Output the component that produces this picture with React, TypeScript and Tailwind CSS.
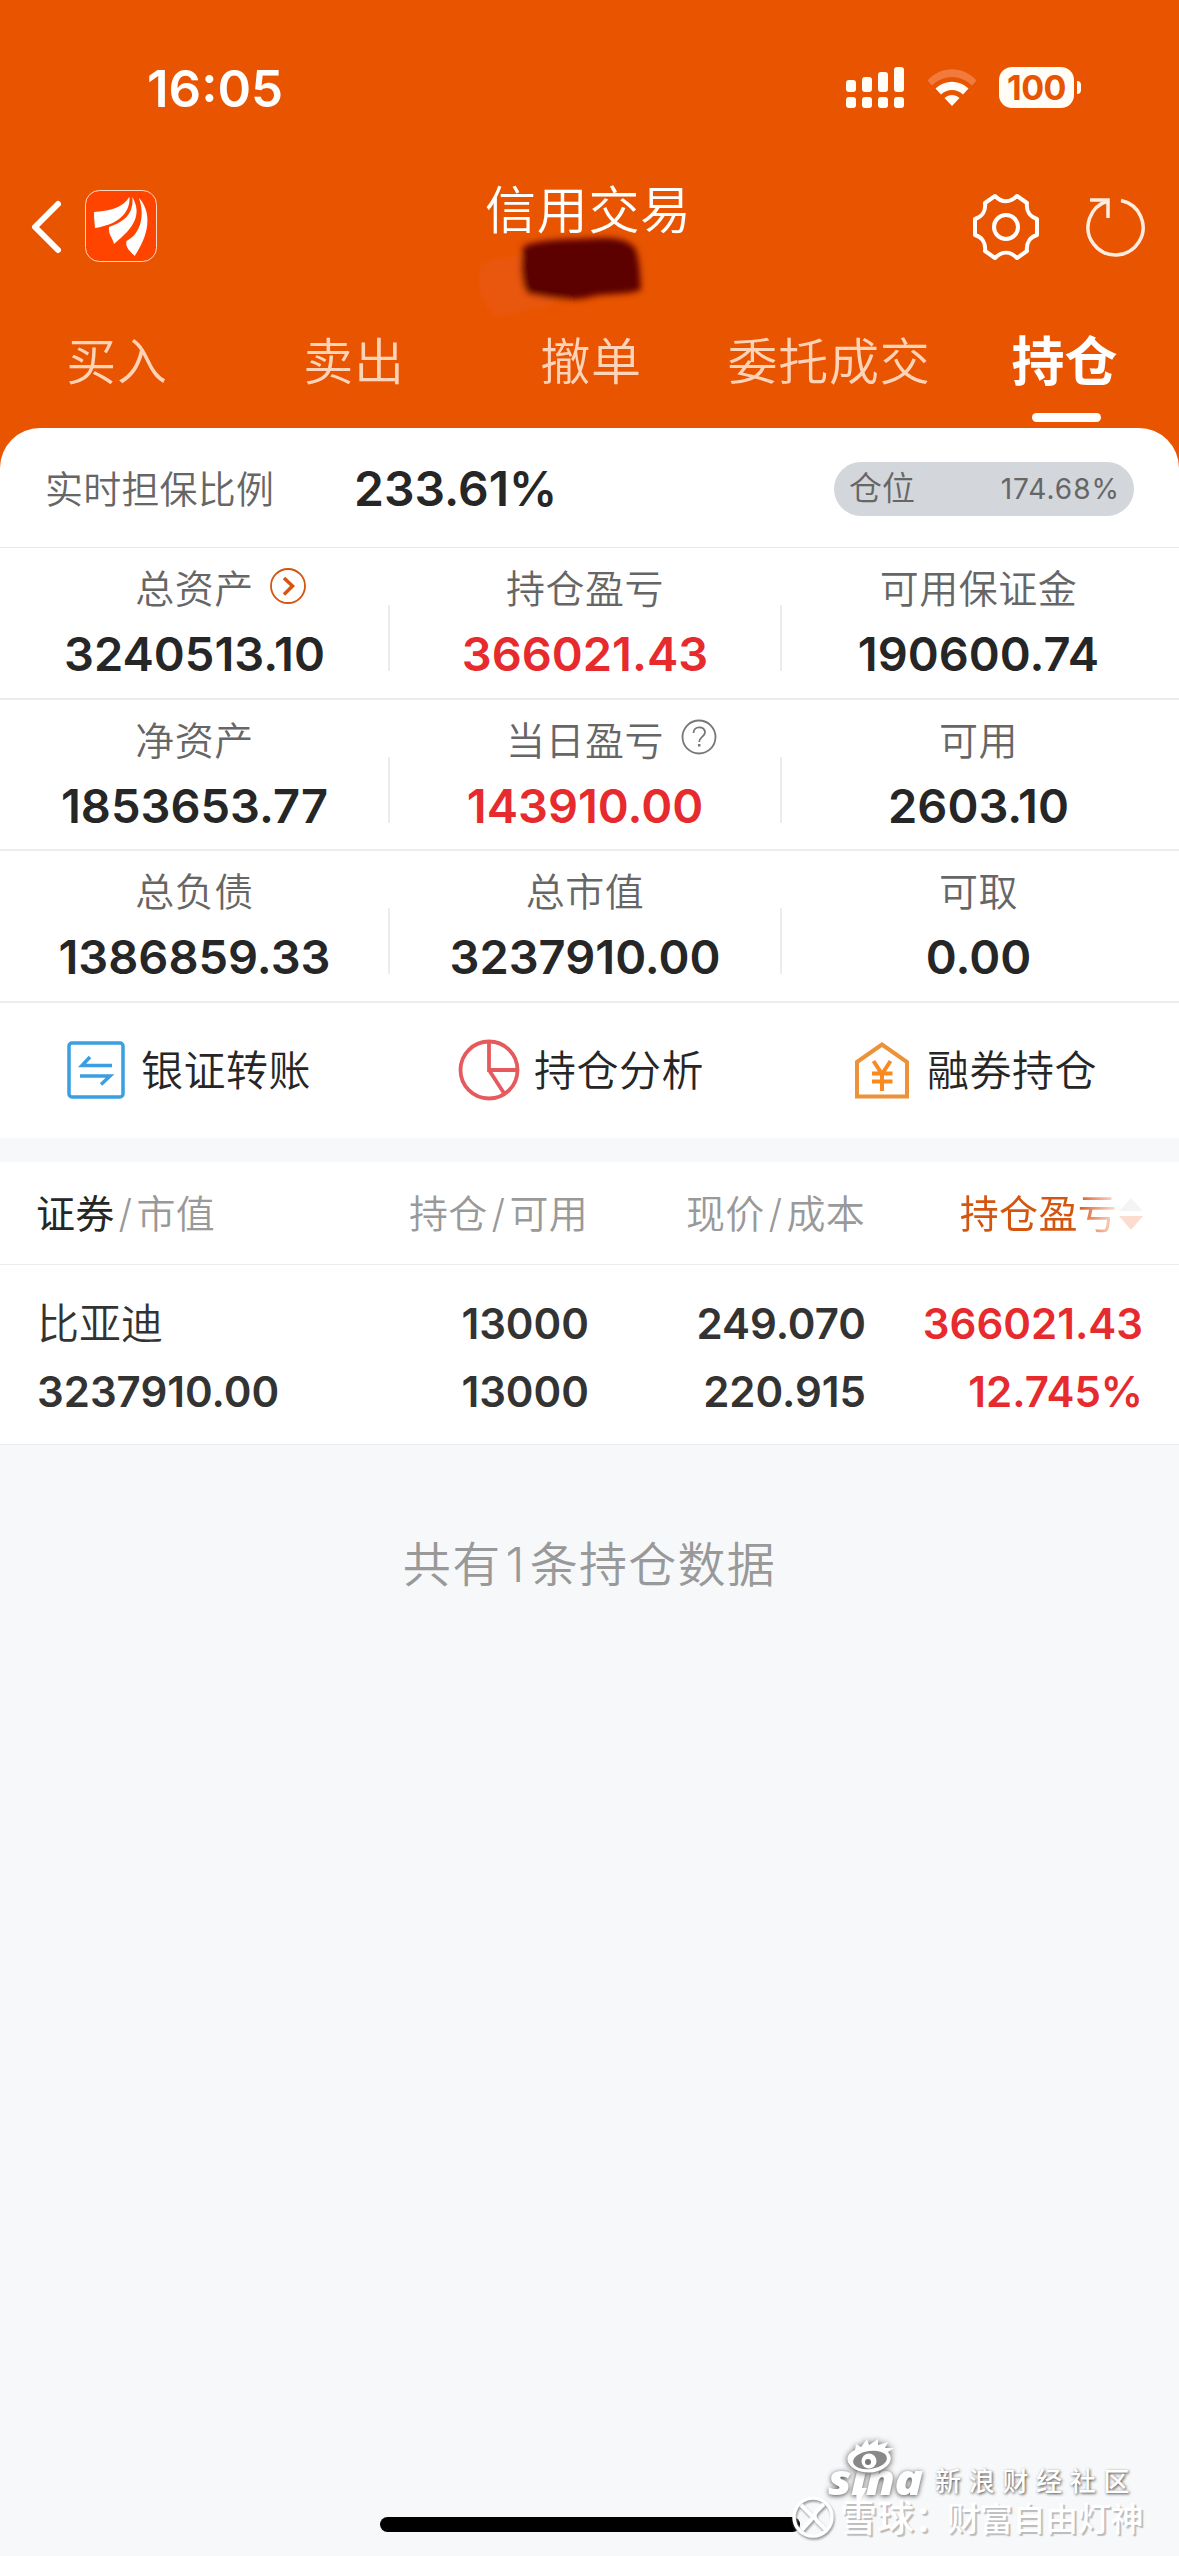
import React, { useState } from 'react';

interface Metric {
  label: string;
  value: string;
  red?: boolean;
  icon?: 'arrow' | 'help';
}

const TABS = ['买入', '卖出', '撤单', '委托成交', '持仓'];

const METRICS: Metric[][] = [
  [
    { label: '总资产', value: '3240513.10', icon: 'arrow' },
    { label: '持仓盈亏', value: '366021.43', red: true },
    { label: '可用保证金', value: '190600.74' },
  ],
  [
    { label: '净资产', value: '1853653.77' },
    { label: '当日盈亏', value: '143910.00', red: true, icon: 'help' },
    { label: '可用', value: '2603.10' },
  ],
  [
    { label: '总负债', value: '1386859.33' },
    { label: '总市值', value: '3237910.00' },
    { label: '可取', value: '0.00' },
  ],
];

const StatusBar = () => (
  <div className="flex h-[176px] items-start pt-[67px] pl-[147px] text-white">
    <span className="w-[699px] pt-px text-[51px] leading-[41px] font-semibold">16:05</span>
    <svg width="58" height="41" viewBox="0 0 58 41" fill="#fffdf5">
      <rect x="0" y="13" width="10" height="12" rx="3" />
      <rect x="16" y="10" width="10" height="15" rx="3" />
      <rect x="32" y="5" width="10" height="20" rx="3" />
      <rect x="48" y="0" width="10" height="25" rx="3" />
      <rect x="0" y="30" width="10" height="11" rx="3" />
      <rect x="16" y="30" width="10" height="11" rx="3" />
      <rect x="32" y="30" width="10" height="11" rx="3" />
      <rect x="48" y="30" width="10" height="11" rx="3" />
    </svg>
    <svg className="mt-[2px] ml-[23px]" width="50" height="38" viewBox="0 0 50 38" fill="#fffdf5">
      <path d="M0.5 11.5C14 -3.5 36 -3.5 49.5 11.5L45 16.5C33 5 17 5 5 16.5Z" fill="#f17a3c" />
      <path d="M8.5 19.5C18 10.5 32 10.5 41.5 19.5L36 25.5C30 19.5 20 19.5 14 25.5Z" />
      <path d="M17.5 29C22 25 28 25 32.5 29L25 37Z" />
    </svg>
    <div className="ml-[22px] flex h-[41px] w-[75px] items-center justify-center rounded-[13px] bg-[#fffdf5] text-[34px] leading-none font-bold tracking-[-0.5px] text-[#e85400]">
      100
    </div>
    <div className="mt-[14px] ml-[3px] h-[13px] w-[4px] rounded-r-full bg-[#fffdf5]"></div>
  </div>
);

const BrandLogo = () => (
  <svg width="72" height="72" viewBox="0 0 72 72">
    <rect x="0.5" y="0.5" width="71" height="71" rx="14" fill="#ff4400" stroke="#ffd9c4" />
    <g fill="#fff">
      <path d="M9 22C24 21 38 18 44.5 6.7C45.5 25 30 35 10 38C9.5 32 9 28 9 22Z" />
      <path d="M24 37C38 32 49 25 47.4 7C57 24 50 37 29 54C28 48 23 45 24 37Z" />
      <path d="M54 8C65 20 67 40 49.7 66C46 62 40 58 41.4 51C56 44 60 25 54 8Z" />
    </g>
  </svg>
);

const TitleBar = () => (
  <div className="flex h-[136px] items-start pl-[31px] text-white">
    <svg className="mt-[24px]" width="30" height="54" viewBox="0 0 30 54" fill="none" stroke="#fff" strokeWidth="6" strokeLinecap="round" strokeLinejoin="round">
      <path d="M27 4L4 27L27 50" />
    </svg>
    <div className="mt-[14px] ml-[24px] w-[72px]">
      <BrandLogo />
    </div>
    <div className="ml-[317px] w-[240px]">
      <h1 className="mt-[9px] pl-[11px] text-[51px] leading-[51px] font-[350] tracking-[0.7px] whitespace-nowrap">信用交易</h1>
      {/* hidden account name */}
      <svg className="mt-[-6px]" width="190" height="90" viewBox="0 0 190 90">
        <defs>
          <filter id="soft" x="-20%" y="-20%" width="140%" height="140%">
            <feGaussianBlur stdDeviation="3" />
          </filter>
        </defs>
        <g filter="url(#soft)">
          <path d="M8 34C30 24 60 24 90 26L120 66C80 70 50 86 20 86C4 72 2 50 8 34Z" fill="#e9570a" />
          <path d="M50 16C70 8 100 10 128 8C142 8 154 10 161 18C166 30 166 46 167 60C150 66 130 62 112 68C90 72 66 66 54 64C46 54 46 28 50 16Z" fill="#5c0000" />
        </g>
      </svg>
    </div>
    <svg className="mt-[17px] ml-[258px]" width="68" height="68" viewBox="-1 -1 68 68" fill="none" stroke="#fff" strokeWidth="4" strokeLinejoin="round">
      <path d="M54 9C53 17 57 23 64 25V41C57 43 53 49 54 57L44 64C37 57 29 57 22 64L12 57C13 49 9 43 2 41V25C9 23 13 17 12 9L22 2C29 9 37 9 44 2Z" />
      <circle cx="33" cy="33" r="12" />
    </svg>
    <svg className="mt-[20px] ml-[45px]" width="62" height="62" viewBox="0 0 62 62" fill="none" stroke="#ffece0" strokeWidth="3.5">
      <path d="M36 4.5A27.5 27.5 0 1 1 23 5" />
      <path d="M5 4H23V22" />
    </svg>
  </div>
);

const MetricCell = ({ item, last }: { item: Metric; last: boolean }) => (
  <div className="relative flex flex-col items-center">
    <div className="relative mt-[21px] text-[39px] leading-[39px] font-[350] tracking-[0.5px] text-[#666]">
      {item.label}
      {item.icon === 'arrow' && (
        <svg className="absolute top-[-2px] left-[134px]" width="38" height="38" viewBox="0 0 38 38" fill="none" stroke="#d4550f">
          <circle cx="19" cy="19" r="17" strokeWidth="1.8" />
          <path d="M15 11L23.5 19L15 27.5" strokeWidth="3.5" />
        </svg>
      )}
      {item.icon === 'help' && (
        <svg className="absolute top-[-3px] left-[174px]" width="38" height="38" viewBox="0 0 38 38" fill="none" stroke="#777" strokeWidth="1.8">
          <circle cx="19" cy="19" r="16.5" />
          <path d="M13.5 15C13.5 7.5 25 7.5 25 14.5C25 18.5 19.2 19 19.2 24" />
          <path d="M19.2 26V28.5" strokeWidth="2.5" />
        </svg>
      )}
    </div>
    <div className={`mt-[22px] text-[47px] leading-[47px] font-semibold ${item.red ? 'text-[#e62a2e]' : 'text-[#262626]'}`}>
      {item.value}
    </div>
    {!last && <div className="absolute top-[57px] right-[-1px] h-[66px] w-[2px] bg-[#ececec]"></div>}
  </div>
);

const TransferIcon = () => (
  <svg width="58" height="58" viewBox="0 0 58 58" fill="none" stroke="#3a9fe0" strokeWidth="3.5">
    <rect x="2" y="2" width="54" height="54" rx="3" />
    <path d="M23 16L15 24.5H45" />
    <path d="M13 35H43L34 43.5" />
  </svg>
);

const PieIcon = () => (
  <svg width="62" height="62" viewBox="0 0 62 62" fill="none" stroke="#e65a5e" strokeWidth="3.8">
    <circle cx="31" cy="31" r="28.5" />
    <path d="M31 2.5V31H59.5M31 31L46.5 55" />
  </svg>
);

const HouseIcon = () => (
  <svg width="54" height="58" viewBox="0 0 54 58" fill="none" stroke="#ec9238" strokeWidth="4">
    <path d="M2 21L27 3.5L52 21V55.5H2Z" />
    <path d="M18.5 20L27 33L35.5 20M27 33V50M17 32.5H37.5M17 40.5H37.5" stroke="#fa8a20" />
  </svg>
);

const Watermark = () => (
  <div className="absolute top-[2430px] left-[788px] h-[120px] w-[380px] text-white">
    <div className="absolute top-[71px] left-[52px] flex items-center leading-[36px] font-medium whitespace-nowrap [text-shadow:2px_2px_1px_#bbb]">
      <span className="w-[107px] text-[37px]">雪球：</span>
      <span className="text-[33px] tracking-[-0.3px]">财富自由灯神</span>
    </div>
    <svg className="absolute top-[64px] left-[2px] drop-shadow-[1px_2px_1px_#999]" width="46" height="46" viewBox="0 0 46 46" fill="none" stroke="#fff" strokeWidth="3.5">
      <circle cx="23" cy="23" r="19" />
      <path d="M11 11L21 21C23 23 23 24 21 26L12 36M34 10L27 17C24 20 24 24 27 27L36 36" strokeWidth="4" />
    </svg>
    <div className="absolute top-[35px] left-[40px] origin-left scale-x-112 font-['Open_Sans',sans-serif] text-[42px] leading-[28px] font-extrabold italic tracking-[-0.5px] [text-shadow:0px_1px_5px_#444]">
      sına
    </div>
    <svg className="absolute top-[4px] left-[56px] drop-shadow-[0px_1px_3px_#444]" width="54" height="82" viewBox="0 0 54 82">
      <path
        fill="#fff"
        d="M4 28C2 22 6 18 11 16L12 10L17 13L23 5L25 11L34 5L34 11L44 8L41 14L50 14L44 18C50 24 46 33 34 37C22 41 8 37 4 28Z"
      />
      <ellipse cx="26" cy="26" rx="17" ry="9" fill="#888" transform="rotate(-8 26 26)" />
      <circle cx="25" cy="27" r="7.5" fill="#fff" />
      <circle cx="24" cy="28" r="3" fill="#777" />
    </svg>
    {/* tail of the i */}
    <svg className="absolute top-[58px] left-[66px]" width="18" height="20" viewBox="0 0 18 20">
      <path d="M2 0H13L3 18Z" fill="#fff" />
    </svg>
    <div className="absolute top-[38px] left-[147px] text-[26px] leading-[28px] font-medium tracking-[7.7px] whitespace-nowrap [text-shadow:1px_1px_3px_#444]">
      新浪财经社区
    </div>
  </div>
);

const App: React.FC = () => {
  const [activeTab, setActiveTab] = useState('持仓');

  return (
    <div className="relative h-[2556px] w-[1179px] overflow-hidden bg-[#f7f8fa] font-['Inter','Noto_Sans_CJK_SC',sans-serif]">
      <div className="bg-[#e85400]">
        <StatusBar />
        <TitleBar />

        <nav className="grid h-[116px] grid-cols-[234px_240px_234px_242px_229px]">
          {TABS.map((tab) => (
            <button
              key={tab}
              onClick={() => setActiveTab(tab)}
              className={`flex flex-col items-center whitespace-nowrap ${
                activeTab === tab ? 'text-[53px] font-bold text-white' : 'text-[50px] font-[350] tracking-[0.8px] text-[#ffd3b8]'
              }`}
            >
              <span className="mt-[23px] h-[54px] leading-[54px]">{tab}</span>
              {activeTab === tab && <span className="mt-[24px] ml-[3px] h-[9px] w-[69px] rounded-full bg-white"></span>}
            </button>
          ))}
        </nav>

        {/* Account summary */}
        <section className="rounded-t-[40px] bg-white">
          <div className="flex h-[120px] items-center border-b border-[#e9e9e9] pt-[2px] pr-[45px] pl-[45px]">
            <span className="w-[309px] text-[38px] leading-none font-[350] tracking-[0.2px] text-[#666]">实时担保比例</span>
            <span className="text-[48px] leading-none font-semibold text-[#262626]">233.61%</span>
            <div className="ml-auto flex h-[54px] w-[300px] items-center justify-between rounded-full bg-[#d3d6db] pr-[14px] pl-[15px] text-[#666]">
              <span className="text-[33px] leading-none font-[350]">仓位</span>
              <span className="text-[28px] leading-none tracking-[1px]">174.68%</span>
            </div>
          </div>

          {METRICS.map((row, i) => (
            <div key={i} className="grid h-[151.5px] grid-cols-[389px_392px_395px] border-b-2 border-[#ececec]">
              {row.map((item, j) => (
                <MetricCell key={item.label} item={item} last={j === 2} />
              ))}
            </div>
          ))}

          <div className="flex h-[135px] items-center pl-[67px] text-[42px] leading-none font-[350] tracking-[0.5px] text-[#262626]">
            <div className="flex w-[391px] items-center">
              <TransferIcon />
              <span className="mt-[2px] ml-[16px]">银证转账</span>
            </div>
            <div className="flex w-[397px] items-center">
              <PieIcon />
              <span className="mt-[2px] ml-[14px]">持仓分析</span>
            </div>
            <div className="flex items-center">
              <HouseIcon />
              <span className="mt-[2px] ml-[18px]">融券持仓</span>
            </div>
          </div>
        </section>
      </div>

      {/* Positions */}
      <section className="mt-[24px] border-b border-[#ececec] bg-white">
        <div className="grid h-[103px] grid-cols-[300px_288px_277px_1fr] items-center border-b border-[#ececec] pt-[2px] pr-[36px] text-right text-[39px] leading-none font-[350] tracking-[0.3px] text-[#999]">
          <div className="pl-[36px] text-left">
            <span className="font-normal text-[#262626]">证券</span>
            <span className="mx-[4px]">/</span>市值
          </div>
          <div>
            持仓<span className="mx-[4px]">/</span>可用
          </div>
          <div>
            现价<span className="mx-[4px]">/</span>成本
          </div>
          <div className="flex items-center justify-end">
            <span className="bg-linear-to-r from-[#d4550f] from-75% to-[#fbe3d6] bg-clip-text font-normal text-transparent">持仓盈亏</span>
            <svg className="ml-[2px]" width="24" height="34" viewBox="0 0 24 34">
              <path d="M0 14L12 1L24 14Z" fill="#f4f4f4" />
              <path d="M0 19H24L12 33Z" fill="#fbdccf" />
            </svg>
          </div>
        </div>
        <div className="grid h-[179px] grid-cols-[301px_288px_277px_1fr] pt-[25px] pr-[36px] text-right text-[42px] leading-[68px] font-semibold text-[#333]">
          <div className="pl-[37px] text-left">
            <div className="h-[68px] text-[42px] font-[350]">比亚迪</div>
            <div>3237910.00</div>
          </div>
          <div>
            <div>13000</div>
            <div>13000</div>
          </div>
          <div>
            <div>249.070</div>
            <div>220.915</div>
          </div>
          <div className="text-[#e62a2e]">
            <div>366021.43</div>
            <div>12.745%</div>
          </div>
        </div>
      </section>

      <p className="mt-[96px] text-center text-[48px] leading-[48px] font-[350] tracking-[1.3px] text-[#999]">
        共有<span className="mx-[4px]">1</span>条持仓数据
      </p>

      <div className="absolute top-[2517px] left-[380px] h-[15px] w-[420px] rounded-full bg-black"></div>
      <Watermark />
    </div>
  );
};

export default App;
